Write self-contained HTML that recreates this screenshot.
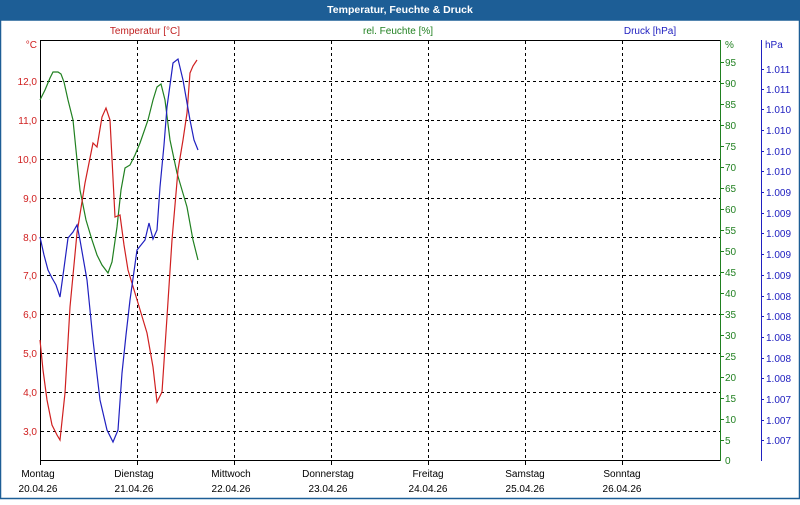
<!DOCTYPE html>
<html><head><meta charset="utf-8"><style>
body{margin:0;width:800px;height:500px;background:#fff;overflow:hidden;font-family:"Liberation Sans",sans-serif}
</style></head><body>
<svg width="800" height="500" xmlns="http://www.w3.org/2000/svg" font-family="Liberation Sans, sans-serif" font-size="10">
<rect x="0" y="0" width="800" height="500" fill="#fff"/>
<rect x="0" y="0" width="800" height="20" fill="#1d5e96"/>
<rect x="0.5" y="20" width="799" height="478.5" fill="none" stroke="#1d5e96" stroke-width="1.5"/>
<text x="400" y="13" fill="#fff" font-weight="bold" font-size="10.5" text-anchor="middle">Temperatur, Feuchte &amp; Druck</text>
<text x="145" y="34" fill="#c02020" text-anchor="middle">Temperatur [°C]</text>
<text x="398" y="34" fill="#208020" text-anchor="middle">rel. Feuchte [%]</text>
<text x="650" y="34" fill="#2020c0" text-anchor="middle">Druck [hPa]</text>
<g stroke="#000" stroke-dasharray="3,3" stroke-width="1">
<line x1="41" x2="720" y1="81.5" y2="81.5"/><line x1="41" x2="720" y1="120.5" y2="120.5"/>
<line x1="41" x2="720" y1="159.5" y2="159.5"/><line x1="41" x2="720" y1="198.5" y2="198.5"/>
<line x1="41" x2="720" y1="237.5" y2="237.5"/><line x1="41" x2="720" y1="275.5" y2="275.5"/>
<line x1="41" x2="720" y1="314.5" y2="314.5"/><line x1="41" x2="720" y1="353.5" y2="353.5"/>
<line x1="41" x2="720" y1="392.5" y2="392.5"/><line x1="41" x2="720" y1="431.5" y2="431.5"/>
<line x1="137.5" x2="137.5" y1="41" y2="460"/><line x1="234.5" x2="234.5" y1="41" y2="460"/>
<line x1="331.5" x2="331.5" y1="41" y2="460"/><line x1="428.5" x2="428.5" y1="41" y2="460"/>
<line x1="525.5" x2="525.5" y1="41" y2="460"/><line x1="622.5" x2="622.5" y1="41" y2="460"/>
</g>
<line x1="40" x2="721" y1="40.5" y2="40.5" stroke="#000"/>
<line x1="40.5" x2="40.5" y1="40" y2="461" stroke="#000"/>
<line x1="40" x2="721" y1="460.5" y2="460.5" stroke="#000"/>
<line x1="720.5" x2="720.5" y1="40" y2="461" stroke="#208020"/>
<line x1="761.5" x2="761.5" y1="40" y2="461" stroke="#2020c0"/>
<g fill="#d02020" text-anchor="end">
<text x="37" y="48">°C</text>
<text x="37" y="85">12,0</text><text x="37" y="124">11,0</text><text x="37" y="163">10,0</text>
<text x="37" y="202">9,0</text><text x="37" y="241">8,0</text><text x="37" y="279">7,0</text>
<text x="37" y="318">6,0</text><text x="37" y="357">5,0</text><text x="37" y="396">4,0</text><text x="37" y="435">3,0</text>
</g>
<g fill="#208020"><text x="725" y="48">%</text>
<text x="725" y="66">95</text><text x="725" y="87">90</text><text x="725" y="108">85</text><text x="725" y="129">80</text>
<text x="725" y="150">75</text><text x="725" y="171">70</text><text x="725" y="192">65</text><text x="725" y="213">60</text>
<text x="725" y="234">55</text><text x="725" y="255">50</text><text x="725" y="276">45</text><text x="725" y="297">40</text>
<text x="725" y="318">35</text><text x="725" y="339">30</text><text x="725" y="360">25</text><text x="725" y="381">20</text>
<text x="725" y="402">15</text><text x="725" y="423">10</text><text x="725" y="444">5</text><text x="725" y="464">0</text>
</g>
<g stroke="#208020"><path d="M721 62.5h3M721 83.5h3M721 104.5h3M721 125.5h3M721 146.5h3M721 167.5h3M721 188.5h3M721 209.5h3M721 230.5h3M721 251.5h3M721 272.5h3M721 293.5h3M721 314.5h3M721 335.5h3M721 356.5h3M721 377.5h3M721 398.5h3M721 419.5h3M721 440.5h3"/></g>
<g fill="#2020c0"><text x="765" y="48">hPa</text>
<text x="766" y="73">1.011</text><text x="766" y="93">1.011</text><text x="766" y="113">1.010</text><text x="766" y="134">1.010</text>
<text x="766" y="155">1.010</text><text x="766" y="175">1.010</text><text x="766" y="196">1.009</text><text x="766" y="217">1.009</text>
<text x="766" y="237">1.009</text><text x="766" y="258">1.009</text><text x="766" y="279">1.009</text><text x="766" y="300">1.008</text>
<text x="766" y="320">1.008</text><text x="766" y="341">1.008</text><text x="766" y="362">1.008</text><text x="766" y="382">1.008</text>
<text x="766" y="403">1.007</text><text x="766" y="424">1.007</text><text x="766" y="444">1.007</text>
</g>
<g stroke="#2020c0"><path d="M762 69.5h2M762 89.5h2M762 109.5h2M762 130.5h2M762 151.5h2M762 171.5h2M762 192.5h2M762 213.5h2M762 233.5h2M762 254.5h2M762 275.5h2M762 296.5h2M762 316.5h2M762 337.5h2M762 358.5h2M762 378.5h2M762 399.5h2M762 420.5h2M762 440.5h2"/></g>
<g stroke="#000"><path d="M40.5 461v4M137.5 461v4M234.5 461v4M331.5 461v4M428.5 461v4M525.5 461v4M622.5 461v4"/></g>
<g fill="#000" text-anchor="middle" font-size="10">
<text x="38" y="477">Montag</text><text x="38" y="492">20.04.26</text>
<text x="134" y="477">Dienstag</text><text x="134" y="492">21.04.26</text>
<text x="231" y="477">Mittwoch</text><text x="231" y="492">22.04.26</text>
<text x="328" y="477">Donnerstag</text><text x="328" y="492">23.04.26</text>
<text x="428" y="477">Freitag</text><text x="428" y="492">24.04.26</text>
<text x="525" y="477">Samstag</text><text x="525" y="492">25.04.26</text>
<text x="622" y="477">Sonntag</text><text x="622" y="492">26.04.26</text>
</g>
<g fill="none" stroke-width="1.2">
<polyline stroke="#208020" points="40,100 45,90 50,78 53,72 58,72 61,74 64,82 68,100 73,120 77,160 80,190 86,220 92,240 97,255 102,265 108,273 112,262 117,227 121,190 125,168 130,165 135,155 140,143 148,120 153,100 157,87 161,84 165,100 170,140 177,173 182,190 187,207 193,240 198,260"/>
<polyline stroke="#d02020" points="40,340 43,370 47,400 52,425 57,435 60,440 65,393 70,307 77,233 85,183 93,143 97,147 102,117 106,108 110,120 115,217 120,215 124,245 128,270 138,303 147,333 153,367 157,402 162,392 167,317 172,240 178,170 183,140 187,113 190,73 193,66 197,60"/>
<polyline stroke="#2020c0" points="40,237 44,255 48,270 52,278 56,285 60,297 64,268 68,238 73,232 77,225 80,240 87,280 93,340 100,400 107,430 113,442 118,430 122,373 126,335 130,300 137,250 145,240 149,223 153,239 157,230 160,187 164,145 167,107 173,63 178,59 183,80 190,120 194,140 198,150"/>
</g>
</svg>
</body></html>
